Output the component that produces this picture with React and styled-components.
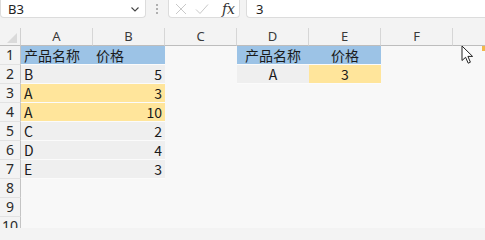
import React from "react";
import styled, { createGlobalStyle } from "styled-components";

const GlobalStyle = createGlobalStyle`
  html, body {
    margin: 0;
    padding: 0;
    background: #f3f3f3;
  }
  * { box-sizing: border-box; }
`;

const Window = styled.div`
  position: relative;
  width: 485px;
  height: 228px;
  overflow: hidden;
  background: #f3f3f3;
  font-family: "Noto Sans", "Noto Sans CJK SC", sans-serif;
`;

const FormulaBar = styled.div`
  display: flex;
  align-items: flex-start;
  height: 19px;
  margin-bottom: 9px;
`;

const Box = styled.div`
  display: flex;
  align-items: center;
  height: ${(p) => p.$h || 18}px;
  background: #fff;
  border: 1px solid #dcdcdc;
  border-top: none;
  border-radius: 0 0 4px 4px;
`;

const NameBox = styled(Box)`
  width: 146px;
  justify-content: space-between;
  padding: 0 4px 0 7px;
  font-size: 13px;
  color: #222;
`;

const Dots = styled.div`
  width: 22px;
  display: flex;
  flex-direction: column;
  align-items: center;
  gap: 2px;
  padding-top: 4px;

  span {
    width: 2px;
    height: 2px;
    border-radius: 50%;
    background: #9a9a9a;
  }
`;

const FxBox = styled(Box)`
  width: 72px;
  padding: 0 4px 0 6px;
  gap: 8px;
`;

const Fx = styled.span`
  margin-left: auto;
  font-family: "DejaVu Serif", "Liberation Serif", serif;
  font-style: italic;
  font-size: 14px;
  line-height: 16px;
  color: #333;
`;

const FormulaInput = styled(Box)`
  flex: 1;
  margin-left: 6px;
  padding-left: 9px;
  border-right: none;
  border-radius: 0 0 0 4px;
  font-size: 13px;
  color: #222;
`;

const Grid = styled.div`
  display: grid;
  grid-template-columns: 21px repeat(7, 72px);
  grid-template-rows: 18px;
  grid-auto-rows: 19px;
`;

const Corner = styled.div`
  position: relative;
  border-right: 1px solid #d0d0d0;
  border-bottom: 1px solid #bdbdbd;

  &::after {
    content: "";
    position: absolute;
    right: 3px;
    bottom: 2px;
    border-style: solid;
    border-width: 0 0 10px 10px;
    border-color: transparent transparent #dadada transparent;
  }
`;

const ColHead = styled.div`
  display: flex;
  align-items: center;
  justify-content: center;
  font-size: 13px;
  line-height: 15px;
  color: #3a3a3a;
  border-bottom: 1px solid #bdbdbd;
  border-right: 1px solid #d6d6d6;
`;

const RowHead = styled.div`
  display: flex;
  align-items: center;
  justify-content: center;
  font-size: 14px;
  line-height: 16px;
  color: #2a2a2a;
  border-right: 1px solid #c4c4c4;
  border-bottom: 1px solid #e2e2e2;
`;

const fills = {
  blue: "#9cc3e6",
  yellow: "#ffe59b",
  grey: "#efefef",
};

const Cell = styled.div`
  display: flex;
  align-items: center;
  justify-content: ${(p) =>
    p.$align === "right" ? "flex-end" : p.$align === "center" ? "center" : "flex-start"};
  padding: 0 3px;
  font-family: "Noto Sans CJK SC", "Noto Sans", sans-serif;
  font-size: 14px;
  line-height: 16px;
  color: #1a1a1a;
  background: ${(p) => fills[p.$fill] || "#f8f8f8"};
  border-bottom: 1px solid ${(p) => (p.$fill ? "#fbfbfb" : "#f8f8f8")};
  white-space: nowrap;
`;

const Pointer = styled.svg`
  position: absolute;
  left: 461px;
  top: 45px;
`;

const Marker = styled.div`
  position: absolute;
  left: 482px;
  top: 46px;
  width: 3px;
  height: 5px;
  background: #f2b84b;
`;

const cols = ["A", "B", "C", "D", "E", "F", ""];

const rows = [
  [
    { v: "产品名称", f: "blue" },
    { v: "价格", f: "blue" },
    {},
    { v: "产品名称", f: "blue", a: "center" },
    { v: "价格", f: "blue", a: "center" },
  ],
  [
    { v: "B", f: "grey" },
    { v: "5", f: "grey", a: "right" },
    {},
    { v: "A", f: "grey", a: "center" },
    { v: "3", f: "yellow", a: "center" },
  ],
  [{ v: "A", f: "yellow" }, { v: "3", f: "yellow", a: "right" }],
  [{ v: "A", f: "yellow" }, { v: "10", f: "yellow", a: "right" }],
  [{ v: "C", f: "grey" }, { v: "2", f: "grey", a: "right" }],
  [{ v: "D", f: "grey" }, { v: "4", f: "grey", a: "right" }],
  [{ v: "E", f: "grey" }, { v: "3", f: "grey", a: "right" }],
  [],
  [],
  [],
];

export default function App() {
  return (
    <Window>
      <GlobalStyle />
      <FormulaBar>
        <NameBox>
          <span>B3</span>
          <svg width="12" height="12" viewBox="0 0 12 12">
            <path d="M2.5 4.5 L6 8 L9.5 4.5" fill="none" stroke="#444" strokeWidth="1.1" />
          </svg>
        </NameBox>
        <Dots>
          <span />
          <span />
          <span />
        </Dots>
        <FxBox>
          <svg width="12" height="12" viewBox="0 0 12 12">
            <path d="M1 1 L11 11 M11 1 L1 11" stroke="#c9c9c9" strokeWidth="1" />
          </svg>
          <svg width="14" height="12" viewBox="0 0 14 12">
            <path d="M1 6.5 L5 10.5 L13 1.5" fill="none" stroke="#c9c9c9" strokeWidth="1" />
          </svg>
          <Fx>fx</Fx>
        </FxBox>
        <FormulaInput>3</FormulaInput>
      </FormulaBar>

      <Grid>
        <Corner />
        {cols.map((c, i) => (
          <ColHead key={i}>{c}</ColHead>
        ))}
        {rows.map((row, r) => (
          <React.Fragment key={r}>
            <RowHead>{r + 1}</RowHead>
            {cols.map((c, i) => {
              const cell = row[i] || {};
              return (
                <Cell key={i} $fill={cell.f} $align={cell.a}>
                  {cell.v}
                </Cell>
              );
            })}
          </React.Fragment>
        ))}
      </Grid>

      <Marker />
      <Pointer width="13" height="20" viewBox="0 0 13 20">
        <path
          d="M1 1 L1 15.5 L4.6 12.3 L7.2 18.2 L9.4 17.2 L6.9 11.4 L11.6 11.4 Z"
          fill="#fff"
          stroke="#222"
          strokeWidth="1"
          strokeLinejoin="round"
        />
      </Pointer>
    </Window>
  );
}
